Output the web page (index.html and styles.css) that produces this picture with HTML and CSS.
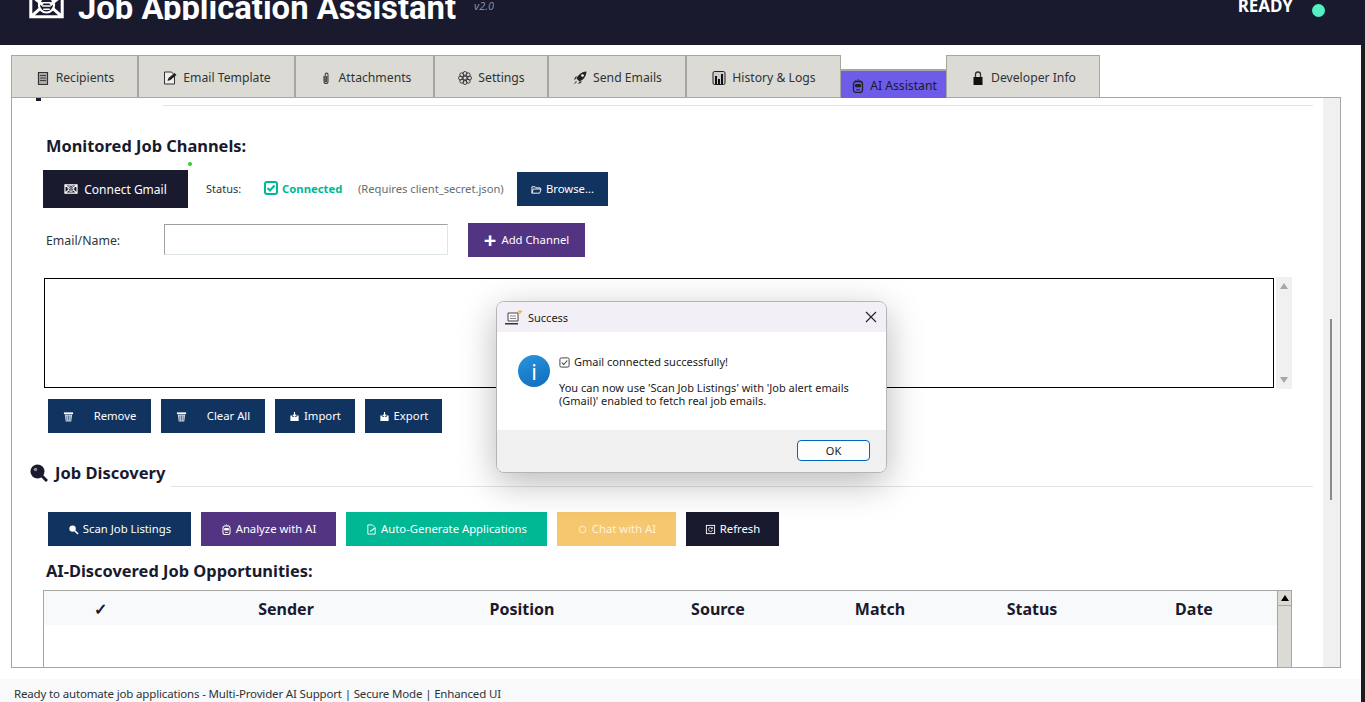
FILE: index.html
```html
<!DOCTYPE html>
<html lang="en">
<head>
    <meta charset="UTF-8">
    <meta name="viewport" content="width=device-width, initial-scale=1.0">
    <title>Job Application Assistant</title>
    <link rel="stylesheet" href="styles.css">
</head>
<body>
    <svg class="sprite" width="0" height="0">
        <symbol id="i-mail" viewBox="0 0 32 24">
            <path d="M1.500 2h29v20h-29z M1.500 2l11 9 M30.500 2l-11 9 M1.500 22l9-8 M30.500 22l-9-8" fill="none" stroke="currentColor" stroke-width="2.800"/>
            <circle cx="16" cy="11" r="7" fill="none" stroke="currentColor" stroke-width="2"/>
            <path d="M12 9h8M12 12h8M13 15h6" stroke="currentColor" stroke-width="1.400"/>
        </symbol>
        <symbol id="i-trash" viewBox="0 0 12 12">
            <path d="M1 1.500h10v2H1z" fill="currentColor"/>
            <path d="M2 4h8l-1 7.500H3z" fill="currentColor" opacity=".8"/>
            <path d="M4.200 5v5.500M6 5v5.500M7.800 5v5.500" stroke="#10335f" stroke-width=".6"/>
        </symbol>
        <symbol id="i-tray" viewBox="0 0 12 12">
            <path d="M1.500 5h2.200v1.600h4.600V5h2.200v6h-9z" fill="currentColor"/>
            <path d="M6 1v5M4.200 4L6 6l1.800-2" fill="none" stroke="currentColor" stroke-width="1.200"/>
        </symbol>
        <symbol id="i-bot" viewBox="0 0 12 14">
            <path d="M6 0v2M3.500 1l1 1.500M8.500 1l-1 1.500" stroke="currentColor" stroke-width=".8"/>
            <rect x="1.500" y="2.500" width="9" height="11" rx="2.500" fill="none" stroke="currentColor" stroke-width="1.300"/>
            <rect x="3" y="5" width="6" height="3.200" rx="1" fill="currentColor"/>
            <path d="M4 10.800h4" stroke="currentColor"/>
        </symbol>
    </svg>

    <header class="app-header">
        <div class="brand">
            <svg class="brand-icon"><use href="#i-mail"/></svg>
            <h1>Job Application Assistant</h1>
            <span class="version">v2.0</span>
        </div>
        <div class="status-wrap">
            <span class="ready">READY</span>
            <span class="ready-dot"></span>
        </div>
    </header>

    <nav class="tabs">
        <a class="tab" href="#">
            <svg class="tab-icon" viewBox="0 0 12 14"><path d="M1.500 1.500h9v12h-9z" fill="#aaa" stroke="#333" stroke-width="1.200"/><path d="M3 4.500h6M3 7h6M3 9.500h6" stroke="#333" stroke-width=".9"/></svg>
            Recipients</a>
        <a class="tab" href="#">
            <svg class="tab-icon" viewBox="0 0 13 14"><path d="M1 1h7l3 3v9H1z" fill="#eee" stroke="#333"/><path d="M4 10l1-3 6-5 2 2-6 5z" fill="#222"/></svg>
            Email Template</a>
        <a class="tab" href="#">
            <svg class="tab-icon" viewBox="0 0 12 14"><path d="M4 5v5.500a2 2 0 0 0 4 0V3.500a1.400 1.400 0 0 0-2.800 0v6.500a.7.7 0 0 0 1.400 0V5" fill="none" stroke="#444" stroke-width="1.100"/></svg>
            Attachments</a>
        <a class="tab" href="#">
            <svg class="tab-icon" viewBox="0 0 14 14"><circle cx="7" cy="7" r="2" fill="none" stroke="#333"/><g fill="none" stroke="#333" stroke-width=".9"><circle cx="7" cy="2.500" r="2"/><circle cx="7" cy="11.500" r="2"/><circle cx="2.500" cy="7" r="2"/><circle cx="11.500" cy="7" r="2"/><circle cx="3.800" cy="3.800" r="2"/><circle cx="10.200" cy="3.800" r="2"/><circle cx="3.800" cy="10.200" r="2"/><circle cx="10.200" cy="10.200" r="2"/></g></svg>
            Settings</a>
        <a class="tab" href="#">
            <svg class="tab-icon" viewBox="0 0 14 14"><path d="M13.500.5C8 1 5 4 3.500 7.500l3 3C10 9 13 6 13.500.5z" fill="#222"/><path d="M3 8l-2 1 1-3 2-1zM6 11l-1 2 3-1 1-2zM3 10l-2.500 3.500L4 11z" fill="#444"/><circle cx="9.500" cy="4.500" r="1.300" fill="#fff"/></svg>
            Send Emails</a>
        <a class="tab" href="#">
            <svg class="tab-icon" viewBox="0 0 13 14"><rect x=".5" y=".5" width="12" height="13" rx="1.500" fill="#ccc" stroke="#222"/><path d="M2.500 5h2v8h-2zM5.500 8h2v5h-2zM8.500 3h2v10h-2z" fill="#111"/></svg>
            History &amp; Logs</a>
        <a class="tab tab-active" href="#">
            <svg class="tab-icon"><use href="#i-bot"/></svg>
            AI Assistant</a>
        <a class="tab" href="#">
            <svg class="tab-icon" viewBox="0 0 12 14"><path d="M3.500 6V3.500a2.500 2.500 0 0 1 5 0V6" fill="none" stroke="#333" stroke-width="1.300"/><rect x="1.500" y="6" width="9" height="8" fill="#111"/></svg>
            Developer Info</a>
    </nav>

    <main class="panel">
        <div class="panel-scroll">
            <div class="clipped-head"><span class="clipped-mark"></span><span class="rule"></span></div>

            <h3 class="sub-title channels-title">Monitored Job Channels:</h3>
            <span class="green-tick"></span>

            <div class="gmail-row">
                <button class="btn btn-dark connect-btn"><svg class="btn-icon mail-small"><use href="#i-mail"/></svg>Connect Gmail</button>
                <span class="status-label">Status:</span>
                <span class="connected">
                    <svg class="check-box" viewBox="0 0 14 14"><rect x="1" y="1" width="12" height="12" rx="2" fill="none" stroke="currentColor" stroke-width="2"/><path d="M3.500 7l2.500 2.500L10.500 4.500" fill="none" stroke="currentColor" stroke-width="2"/></svg>
                    Connected</span>
                <span class="hint">(Requires client_secret.json)</span>
                <button class="btn btn-navy browse-btn"><svg class="btn-icon" viewBox="0 0 12 12"><path d="M1 10V3h3.500l1 1.200H10v1.300M1 10l1.500-4.500H11L9.500 10z" fill="none" stroke="currentColor"/></svg>Browse...</button>
            </div>

            <div class="channel-row">
                <label class="field-label" for="channel">Email/Name:</label>
                <input class="field" id="channel" type="text">
                <button class="btn btn-purple add-btn"><span class="plus">+</span>Add Channel</button>
            </div>

            <div class="channel-list-wrap">
                <div class="channel-list"></div>
                <div class="flat-scroll"><span class="arrow-up"></span><span class="arrow-down"></span></div>
            </div>

            <div class="btn-row list-actions">
                <button class="btn btn-navy btn-wide"><svg class="btn-icon"><use href="#i-trash"/></svg>Remove</button>
                <button class="btn btn-navy btn-wide"><svg class="btn-icon"><use href="#i-trash"/></svg>Clear All</button>
                <button class="btn btn-navy"><svg class="btn-icon"><use href="#i-tray"/></svg>Import</button>
                <button class="btn btn-navy"><svg class="btn-icon"><use href="#i-tray"/></svg>Export</button>
            </div>

            <div class="section-head">
                <svg class="section-icon" viewBox="0 0 18 18"><circle cx="7.500" cy="7.500" r="7" fill="#1a1a2e"/><circle cx="5.500" cy="5.500" r="1.800" fill="#8a8a99"/><path d="M12 12l5 5" stroke="#1a1a2e" stroke-width="3"/></svg>
                <h2>Job Discovery</h2>
                <span class="rule"></span>
            </div>

            <div class="btn-row discovery-actions">
                <button class="btn btn-navy"><svg class="btn-icon" viewBox="0 0 12 12"><circle cx="5" cy="5" r="3.500" fill="currentColor"/><path d="M7.500 7.500L11 11" stroke="currentColor" stroke-width="1.600"/></svg>Scan Job Listings</button>
                <button class="btn btn-purple"><svg class="btn-icon bot-small"><use href="#i-bot"/></svg>Analyze with AI</button>
                <button class="btn btn-green"><svg class="btn-icon" viewBox="0 0 12 12"><path d="M2 1h5l3 3v7H2z" fill="none" stroke="currentColor"/><path d="M4 9l1-2 4-3 1 1-4 3z" fill="currentColor"/></svg>Auto-Generate Applications</button>
                <button class="btn btn-amber"><svg class="btn-icon" viewBox="0 0 12 12"><circle cx="6" cy="6" r="3.500" fill="none" stroke="currentColor"/></svg>Chat with AI</button>
                <button class="btn btn-dark"><svg class="btn-icon" viewBox="0 0 12 12"><rect x="1.500" y="1.500" width="9" height="9" fill="none" stroke="currentColor"/><path d="M8 5a2.200 2.200 0 1 0 .2 1.500M8 3.500V5H6.500" fill="none" stroke="currentColor" stroke-width=".9"/></svg>Refresh</button>
            </div>

            <h3 class="sub-title jobs-title">AI-Discovered Job Opportunities:</h3>

            <div class="jobs-wrap">
                <div class="jobs-table">
                    <div class="jobs-head">
                        <span>✓</span><span>Sender</span><span>Position</span><span>Source</span><span>Match</span><span>Status</span><span>Date</span>
                    </div>
                </div>
                <div class="classic-scroll"><span class="scroll-btn"><span class="arrow-black"></span></span></div>
            </div>
        </div>
        <div class="page-scroll"><span class="page-thumb"></span></div>
    </main>

    <footer class="status-bar">Ready to automate job applications - Multi-Provider AI Support | Secure Mode | Enhanced UI</footer>
    <div class="edge"></div>

    <div class="dialog">
        <div class="dialog-title">
            <svg class="dialog-app" viewBox="0 0 18 16"><path d="M3 4h10v8H3z" fill="#fff" stroke="#444"/><path d="M5 7h6M5 9.500h6" stroke="#666" stroke-width=".8"/><path d="M0 14h13v1.500H0z" fill="#333"/><path d="M15 0l.8 2 2 .8-2 .8-.8 2-.8-2-2-.8 2-.8z" fill="#f0b429"/></svg>
            <span>Success</span>
            <svg class="dialog-close" viewBox="0 0 12 12"><path d="M1 1l10 10M11 1L1 11" stroke="#222" stroke-width="1.100"/></svg>
        </div>
        <div class="dialog-body">
            <div class="info-icon">i</div>
            <div class="dialog-text">
                <p class="dialog-first"><svg class="mini-check" viewBox="0 0 12 12"><rect x="1" y="1" width="10" height="10" rx="1.500" fill="none" stroke="#333"/><path d="M3 6l2.200 2.200L9 3.800" fill="none" stroke="#333" stroke-width="1.100"/></svg>Gmail connected successfully!</p>
                <p>You can now use 'Scan Job Listings' with 'Job alert emails (Gmail)' enabled to fetch real job emails.</p>
            </div>
        </div>
        <div class="dialog-foot">
            <button class="ok-btn">OK</button>
        </div>
    </div>
</body>
</html>
```

FILE: styles.css
```css
* {
    margin: 0;
    padding: 0;
    box-sizing: border-box;
}

html, body {
    height: 702px;
    overflow: hidden;
}

body {
    background: #fff;
    color: #1a1a2e;
    font-family: 'Noto Sans', sans-serif;
    display: flex;
    flex-direction: column;
    position: relative;
}

.sprite {
    position: absolute;
}

button {
    font-family: inherit;
    border: none;
}

/* Header */
.app-header {
    height: 45px;
    flex: none;
    background: #1a1a2e;
    color: #fff;
    display: flex;
    justify-content: space-between;
    overflow: hidden;
    padding: 0 40px 0 29px;
}

/* the title label cuts its descenders off at 20px */
.brand {
    display: flex;
    align-items: flex-start;
    height: 20px;
    overflow: hidden;
}

.brand-icon {
    width: 35px;
    height: 26px;
    margin-top: -7px;
}

.brand h1 {
    font-family: Roboto, sans-serif;
    font-size: 32.800px;
    line-height: 38px;
    margin: -11px 0 0 14px;
    font-weight: 700;
    white-space: nowrap;
}

.version {
    font-size: 11px;
    line-height: 11px;
    font-style: italic;
    color: #8a8a99;
    margin: 0 0 0 18px;
}

.status-wrap {
    display: flex;
    align-items: flex-start;
}

.ready {
    font-size: 17px;
    font-weight: 700;
    line-height: 22px;
    margin-top: -5px;
}

.ready-dot {
    width: 13px;
    height: 13px;
    border-radius: 50%;
    background: #55efc4;
    margin: 4px 0 0 19px;
}

/* Tabs */
.tabs {
    flex: none;
    height: 52px;
    padding: 10px 0 0 11px;
    display: grid;
    grid-template-columns: 127px 157px 139px 114px 138px 155px 105px 154px;
    align-items: end;
}

.tab {
    height: 42px;
    display: flex;
    align-items: center;
    justify-content: center;
    gap: 6px;
    padding: 2px 0 0 1px;
    background: #dcdad5;
    border: 1px solid #a8a6a0;
    border-bottom: none;
    color: #2d3436;
    font-size: 12.200px;
    text-decoration: none;
    white-space: nowrap;
}

.tab-icon {
    width: 14px;
    height: 14px;
    color: #222;
    flex: none;
}

.tab-active {
    height: 29px;
    margin-bottom: -1px;
    background: #6c5ce7;
    color: #1a1a2e;
    position: relative;
    z-index: 1;
    border: none;
    border-top: 2px solid #a8a6a0;
    gap: 5px;
}

/* Main panel */
.panel {
    margin: 0 24px 0 11px;
    height: 571px;
    flex: none;
    border: 1px solid #a8a6a0;
    display: flex;
    overflow: hidden;
    background: #fff;
}

.panel-scroll {
    flex: 1;
    min-width: 0;
    overflow: hidden;
    position: relative;
    padding-right: 10px;
}

.page-scroll {
    width: 17px;
    flex: none;
    background: #f0f0f0;
    padding-top: 221px;
    padding-left: 7px;
}

.page-thumb {
    display: block;
    width: 2px;
    height: 181px;
    background: #8a8a8a;
}

.rule {
    flex: 1;
    height: 1px;
    background: #dfe6e9;
}

.clipped-head {
    height: 8px;
    display: flex;
    align-items: flex-end;
    padding-left: 24px;
}

.clipped-mark {
    width: 5px;
    height: 3px;
    background: #1a1a2e;
    margin-bottom: 5px;
}

.clipped-head .rule {
    margin-left: 122px;
}

.sub-title {
    font-size: 16.400px;
    font-weight: 700;
    line-height: 22px;
    margin-left: 34px;
}

.channels-title {
    margin-top: 29px;
}

.green-tick {
    display: block;
    width: 4px;
    height: 4px;
    border-radius: 50%;
    background: #2ecc2e;
    margin: 5px 0 0 176px;
}

.gmail-row {
    display: flex;
    align-items: center;
    margin: 4px 0 0 31px;
    height: 38px;
}

.btn {
    height: 34px;
    color: #fff;
    font-size: 11.300px;
    display: inline-flex;
    align-items: center;
    justify-content: center;
    gap: 4px;
    white-space: nowrap;
}

.browse-btn, .add-btn, .list-actions .btn, .discovery-actions .btn {
    padding-bottom: 2px;
}

.btn-icon {
    width: 11px;
    height: 11px;
    flex: none;
    margin-top: 3px;
}

.btn-dark { background: #1a1a2e; }
.btn-navy { background: #10335f; }
.btn-purple { background: #533483; }
.btn-green { background: #00b894; }
.btn-amber { background: #f6c76e; color: #fdf3dc; }

.connect-btn {
    width: 145px;
    height: 38px;
    gap: 6px;
    font-size: 12px;
}

.mail-small {
    width: 14px;
    height: 10px;
    margin-top: 0;
}

.status-label, .connected, .hint {
    margin-bottom: 2px;
}

.status-label {
    font-size: 11px;
    margin-left: 18px;
    width: 58px;
    color: #2d3436;
}

.connected {
    color: #00b894;
    font-size: 11.300px;
    font-weight: 700;
    display: flex;
    align-items: center;
    gap: 4px;
    width: 94px;
}

.check-box {
    width: 14px;
    height: 14px;
}

.hint {
    font-size: 11.200px;
    color: #636e72;
    width: 159px;
}

.browse-btn {
    width: 91px;
}

.channel-row {
    display: flex;
    align-items: center;
    margin: 15px 0 0 34px;
    height: 34px;
}

.field-label {
    width: 118px;
    font-size: 12.300px;
    color: #2d3436;
}

.field {
    width: 284px;
    height: 31px;
    margin-bottom: 2px;
    border: 1px solid #dfe6e9;
    border-top-color: #a0a0a0;
    border-left-color: #a0a0a0;
}

.add-btn {
    width: 117px;
    margin-left: 20px;
    gap: 5px;
}

.plus {
    font-size: 22px;
    font-weight: 700;
    line-height: 18px;
}

.channel-list-wrap {
    display: flex;
    margin: 20px 0 0 32px;
    height: 112px;
}

.channel-list {
    width: 1230px;
    height: 110px;
    margin-top: 1px;
    border: 1px solid #000;
}

.flat-scroll {
    width: 16px;
    margin-left: 2px;
    background: #f0f0f0;
    display: flex;
    flex-direction: column;
    justify-content: space-between;
    align-items: center;
    padding: 6px 0;
}

.arrow-up, .arrow-down, .arrow-black {
    display: block;
    width: 0;
    height: 0;
    border-left: 4px solid transparent;
    border-right: 4px solid transparent;
}

.arrow-up { border-bottom: 6px solid #a8a8a8; }
.arrow-down { border-top: 6px solid #a8a8a8; }

.btn-row {
    display: grid;
    gap: 10px;
    margin-left: 36px;
}

.list-actions {
    margin-top: 10px;
    grid-template-columns: 103px 104px 80px 77px;
}

.btn-wide {
    gap: 20px;
}

.section-head {
    display: flex;
    align-items: center;
    margin: 27px 0 0 18px;
    height: 26px;
}

.section-icon {
    width: 18px;
    height: 18px;
    margin-right: 7px;
}

.section-head h2 {
    font-size: 16.500px;
    font-weight: 700;
    line-height: 26px;
}

.section-head .rule {
    margin: 26px 0 0 6px;
}

.discovery-actions {
    margin-top: 26px;
    grid-template-columns: 143px 135px 201px 119px 93px;
}

.jobs-title {
    margin-top: 14px;
}

.jobs-wrap {
    display: flex;
    margin: 8px 0 0 31px;
    height: 100px;
}

.jobs-table {
    width: 1234px;
    border-top: 1px solid #a8a6a0;
    border-left: 1px solid #a8a6a0;
}

.jobs-head {
    height: 34px;
    padding-top: 2px;
    background: #f8f9fa;
    display: grid;
    grid-template-columns: 112px 260px 212px 180px 144px 160px 164px;
    align-items: center;
    text-align: center;
    font-size: 16px;
    font-weight: 700;
}

.classic-scroll {
    width: 15px;
    background: #dcdad5;
    border: 1px solid #a8a6a0;
    border-bottom: none;
}

.scroll-btn {
    height: 15px;
    display: flex;
    align-items: center;
    justify-content: center;
    border-bottom: 1px solid #a8a6a0;
}

.arrow-black {
    border-bottom: 6px solid #000;
}

/* Status bar */
.status-bar {
    margin-top: 11px;
    height: 23px;
    flex: none;
    background: #f8f9fa;
    color: #2d3436;
    font-size: 11.500px;
    letter-spacing: -0.16px;
    line-height: 30px;
    padding-left: 14px;
    white-space: nowrap;
    overflow: hidden;
}

.edge {
    position: absolute;
    top: 45px;
    right: 0;
    width: 4px;
    bottom: 0;
    background: #1c1c1c;
}

/* Message box sits over the window */
.dialog {
    position: absolute;
    left: 496px;
    top: 301px;
    width: 391px;
    height: 172px;
    border-radius: 8px;
    overflow: hidden;
    border: 1px solid #b5b5b5;
    background: #fff;
    box-shadow: 0 10px 36px rgba(0, 0, 0, 0.28);
    color: #1a1a1a;
    display: flex;
    flex-direction: column;
}

.dialog-title {
    height: 30px;
    flex: none;
    background: #f3eff6;
    display: flex;
    align-items: center;
    padding: 0 9px 0 8px;
    font-size: 11px;
    gap: 5px;
}

.dialog-title span {
    flex: 1;
}

.dialog-app {
    width: 18px;
    height: 16px;
}

.dialog-close {
    width: 12px;
    height: 12px;
}

.dialog-body {
    flex: 1;
    display: flex;
    padding: 23px 20px 0 21px;
}

.info-icon {
    width: 32px;
    height: 32px;
    border-radius: 50%;
    background: linear-gradient(160deg, #2a95dc, #0f6cbd);
    color: #fff;
    font-size: 22px;
    line-height: 32px;
    text-align: center;
    flex: none;
}

.dialog-text {
    margin-left: 9px;
    font-size: 11px;
    line-height: 13px;
}

.dialog-first {
    margin-bottom: 13px;
}

.mini-check {
    width: 11px;
    height: 11px;
    margin-right: 4px;
    vertical-align: -2px;
}

.dialog-foot {
    height: 42px;
    flex: none;
    background: #f0f0f0;
    display: flex;
    justify-content: flex-end;
    align-items: center;
    padding: 0 16px 1px 0;
}

.ok-btn {
    width: 73px;
    height: 21px;
    background: #fdfdfd;
    border: 1px solid #0067c0;
    border-radius: 4px;
    font-size: 11px;
    color: #1a1a1a;
}
```
